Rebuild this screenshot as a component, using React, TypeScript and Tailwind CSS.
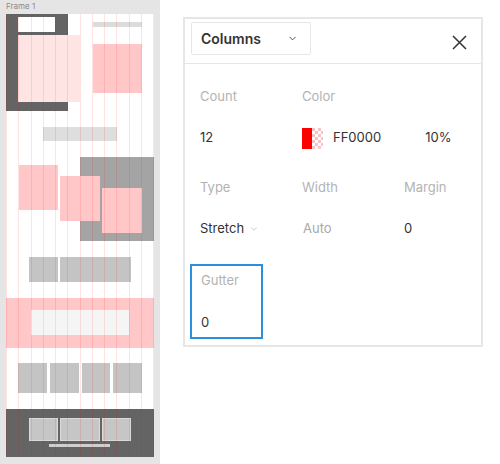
import { ChevronDown } from 'lucide-react';

// canvas thumbnail: shapes sit at their place in the frame
const shapes: { c: string; l: number; t: number; w: number; h: number }[] = [
  { c: 'bg-[#646464]', l: 0, t: 0, w: 62, h: 97 },
  { c: 'bg-white', l: 12, t: 3, w: 37, h: 15 },
  { c: 'bg-[#ffe4e4]', l: 12, t: 21, w: 62, h: 67 },
  { c: 'bg-[#dcdcdc]', l: 87, t: 8, w: 49, h: 5 },
  { c: 'bg-[#ffc7c7]', l: 87, t: 30, w: 49, h: 49 },
  { c: 'bg-[#dedede]', l: 37, t: 113, w: 74, h: 14 },
  { c: 'bg-[#a4a4a4]', l: 74, t: 143, w: 74, h: 84 },
  { c: 'bg-[#ffc7c7]', l: 13, t: 151, w: 39, h: 45 },
  { c: 'bg-[#ffc7c7]', l: 54, t: 162, w: 40, h: 45 },
  { c: 'bg-[#ffc7c7]', l: 96, t: 174, w: 40, h: 45 },
  { c: 'bg-[#c4c4c4]', l: 23, t: 243, w: 29, h: 25 },
  { c: 'bg-[#c4c4c4]', l: 54, t: 243, w: 71, h: 25 },
  { c: 'bg-[#ffc7c7]', l: 0, t: 284, w: 148, h: 50 },
  { c: 'bg-[#f5f5f5]', l: 25, t: 296, w: 98, h: 25 },
  { c: 'bg-[#c4c4c4]', l: 12, t: 349, w: 29, h: 30 },
  { c: 'bg-[#c4c4c4]', l: 44, t: 349, w: 29, h: 30 },
  { c: 'bg-[#c4c4c4]', l: 76, t: 349, w: 28, h: 30 },
  { c: 'bg-[#c4c4c4]', l: 107, t: 349, w: 29, h: 30 },
  { c: 'bg-[#646464]', l: 0, t: 395, w: 148, h: 48 },
  { c: 'bg-[#c6c6c6] border border-[#dadada]', l: 23, t: 404, w: 29, h: 23 },
  { c: 'bg-[#c6c6c6] border border-[#dadada]', l: 54, t: 404, w: 40, h: 23 },
  { c: 'bg-[#c6c6c6] border border-[#dadada]', l: 96, t: 404, w: 29, h: 23 },
  { c: 'bg-[#cfcfcf]', l: 43, t: 430, w: 61, h: 3 },
];

function Frame() {
  return (
    <div className="w-[160px] h-[464px] shrink-0 bg-[#e5e5e5] pl-[6px]">
      <div className="h-[14px] text-[8px] leading-[12px] text-[#8a8a8a]">Frame 1</div>
      <div className="relative w-[148px] h-[443px] bg-white overflow-hidden">
        {shapes.map((s, i) => (
          <div
            key={i}
            className={`absolute ${s.c}`}
            style={{ left: s.l, top: s.t, width: s.w, height: s.h }}
          />
        ))}
        {/* column grid overlay */}
        <div className="absolute inset-0 flex border-r border-[rgba(255,0,0,0.11)]">
          {Array.from({ length: 12 }).map((_, i) => (
            <div key={i} className="flex-1 border-l border-[rgba(255,0,0,0.11)]" />
          ))}
        </div>
      </div>
    </div>
  );
}

function Swatch() {
  return (
    <svg width="21" height="21" viewBox="0 0 21 21" className="shrink-0">
      <rect x="0" y="0" width="10" height="21" fill="#ff0000" />
      <rect x="10" y="0" width="11" height="21" fill="#fff" />
      {Array.from({ length: 7 }).map((_, r) =>
        Array.from({ length: 4 }).map((_, c) =>
          (r + c) % 2 === 0 ? (
            <rect key={`${r}-${c}`} x={10 + c * 3} y={r * 3} width="3" height="3" fill="#f6c4c4" />
          ) : null
        )
      )}
    </svg>
  );
}

function Field({ label, children }: { label: string; children: React.ReactNode }) {
  return (
    <div className="w-[102px] shrink-0 px-[10px]">
      <div className="h-[20px] leading-[20px] text-[13px] text-[#b3b3b3]">{label}</div>
      <div className="mt-[22px] h-[20px] flex items-center text-[13px] text-[#333]">{children}</div>
    </div>
  );
}

export default function App() {
  return (
    <div className="flex w-[500px] h-[464px] bg-white" style={{ fontFamily: 'Inter, "Noto Sans", sans-serif' }}>
      <Frame />
      <div className="ml-[23px] mt-[17px] w-[300px] h-[330px] border-2 border-[#e6e6e6] flex flex-col">
        <div className="h-[45px] shrink-0 border-b border-[#e6e6e6] flex items-start pt-[3px] pl-[6px] pr-[14px]">
          <div className="w-[120px] h-[33px] border border-[#e6e6e6] rounded-[2px] flex items-center pl-[9px] pr-[12px]">
            <span className="text-[14px] font-semibold text-[#333]">Columns</span>
            <ChevronDown size={11} strokeWidth={2} className="ml-auto text-[#444]" />
          </div>
          <svg width="15" height="15" viewBox="0 0 15 15" className="ml-auto mt-[13px]">
            <path d="M1 1 L14 14 M14 1 L1 14" stroke="#333" strokeWidth="1.5" />
          </svg>
        </div>
        <div className="pl-[5px] pt-[22px] overflow-hidden">
          <div className="flex">
            <Field label="Count">12</Field>
            <div className="shrink-0 px-[10px]">
              <div className="h-[20px] leading-[20px] text-[13px] text-[#b3b3b3]">Color</div>
              <div className="mt-[22px] h-[20px] flex items-center text-[13px] text-[#333]">
                <Swatch />
                <span className="ml-[10px]">FF0000</span>
                <span className="ml-[44px]">10%</span>
              </div>
            </div>
          </div>
          <div className="flex mt-[29px]">
            <Field label="Type">
              Stretch
              <ChevronDown size={10} strokeWidth={1.5} className="ml-[5px] text-[#aaa]" />
            </Field>
            <Field label="Width">
              <span className="text-[#a8a8a8] pl-[1px]">Auto</span>
            </Field>
            <Field label="Margin">0</Field>
          </div>
          <div className="mt-[25px] w-[73px] border-2 border-[#2b8fdb] pt-[4px] pb-[5px] px-[9px]">
            <div className="h-[20px] leading-[20px] text-[13px] text-[#b3b3b3]">Gutter</div>
            <div className="mt-[22px] h-[20px] leading-[20px] text-[13px] text-[#333]">0</div>
          </div>
        </div>
      </div>
    </div>
  );
}
